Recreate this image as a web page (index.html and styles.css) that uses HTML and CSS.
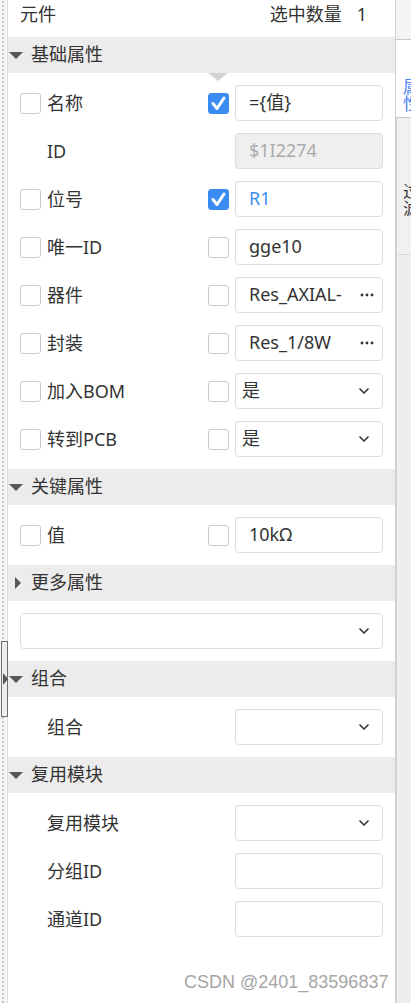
FILE: index.html
```html
<!DOCTYPE html>
<html lang="zh-CN">
<head>
<meta charset="utf-8">
<title>元件属性</title>
<link rel="stylesheet" href="styles.css">
</head>
<body>
<div class="app">
  <div class="grip">
    <div class="grip-handle"><span class="grip-arrow"></span></div>
  </div>

  <div class="panel">
    <div class="topbar">
      <span>元件</span>
      <span class="count">选中数量<span class="count-num">1</span></span>
    </div>

    <div class="sec-head"><span class="tri-box"><span class="tri-down"></span></span>基础属性</div>
    <div class="sec-body">
      <span class="caret"></span>
      <div class="row">
        <span class="cb"></span><span class="label">名称</span>
        <span class="cb checked"><svg viewBox="0 0 21 21" width="21" height="21"><polyline points="5,10.5 9,15.5 16,5" fill="none" stroke="#fff" stroke-width="3" stroke-linecap="round" stroke-linejoin="round"/></svg></span>
        <div class="field"><span class="field-text">={值}</span></div>
      </div>
      <div class="row">
        <span></span><span class="label">ID</span><span></span>
        <div class="field disabled"><span class="field-text">$1I2274</span></div>
      </div>
      <div class="row">
        <span class="cb"></span><span class="label">位号</span>
        <span class="cb checked"><svg viewBox="0 0 21 21" width="21" height="21"><polyline points="5,10.5 9,15.5 16,5" fill="none" stroke="#fff" stroke-width="3" stroke-linecap="round" stroke-linejoin="round"/></svg></span>
        <div class="field"><span class="field-text blue">R1</span></div>
      </div>
      <div class="row">
        <span class="cb"></span><span class="label">唯一ID</span><span class="cb"></span>
        <div class="field"><span class="field-text">gge10</span></div>
      </div>
      <div class="row">
        <span class="cb"></span><span class="label">器件</span><span class="cb"></span>
        <div class="field more"><span class="field-text clip">Res_AXIAL-0.3</span><svg class="dots" viewBox="0 0 14 4" width="14" height="4"><circle cx="2" cy="2" r="1.4"/><circle cx="7" cy="2" r="1.4"/><circle cx="12" cy="2" r="1.4"/></svg></div>
      </div>
      <div class="row">
        <span class="cb"></span><span class="label">封装</span><span class="cb"></span>
        <div class="field more"><span class="field-text clip">Res_1/8W</span><svg class="dots" viewBox="0 0 14 4" width="14" height="4"><circle cx="2" cy="2" r="1.4"/><circle cx="7" cy="2" r="1.4"/><circle cx="12" cy="2" r="1.4"/></svg></div>
      </div>
      <div class="row">
        <span class="cb"></span><span class="label">加入BOM</span><span class="cb"></span>
        <div class="field select"><span class="field-text">是</span><svg class="chev" viewBox="0 0 10 6" width="10" height="6"><polyline points="1,1 5,5 9,1"/></svg></div>
      </div>
      <div class="row">
        <span class="cb"></span><span class="label">转到PCB</span><span class="cb"></span>
        <div class="field select"><span class="field-text">是</span><svg class="chev" viewBox="0 0 10 6" width="10" height="6"><polyline points="1,1 5,5 9,1"/></svg></div>
      </div>
    </div>

    <div class="sec-head"><span class="tri-box"><span class="tri-down"></span></span>关键属性</div>
    <div class="sec-body">
      <div class="row">
        <span class="cb"></span><span class="label">值</span><span class="cb"></span>
        <div class="field"><span class="field-text">10kΩ</span></div>
      </div>
    </div>

    <div class="sec-head"><span class="tri-box"><span class="tri-right"></span></span>更多属性</div>
    <div class="sec-body">
      <div class="row">
        <div class="field select wide"><span class="field-text"></span><svg class="chev" viewBox="0 0 10 6" width="10" height="6"><polyline points="1,1 5,5 9,1"/></svg></div>
      </div>
    </div>

    <div class="sec-head"><span class="tri-box"><span class="tri-down"></span></span>组合</div>
    <div class="sec-body">
      <div class="row">
        <span></span><span class="label">组合</span><span></span>
        <div class="field select"><span class="field-text"></span><svg class="chev" viewBox="0 0 10 6" width="10" height="6"><polyline points="1,1 5,5 9,1"/></svg></div>
      </div>
    </div>

    <div class="sec-head"><span class="tri-box"><span class="tri-down"></span></span>复用模块</div>
    <div class="sec-body">
      <div class="row">
        <span></span><span class="label">复用模块</span><span></span>
        <div class="field select"><span class="field-text"></span><svg class="chev" viewBox="0 0 10 6" width="10" height="6"><polyline points="1,1 5,5 9,1"/></svg></div>
      </div>
      <div class="row">
        <span></span><span class="label">分组ID</span><span></span>
        <div class="field"><span class="field-text"></span></div>
      </div>
      <div class="row">
        <span></span><span class="label">通道ID</span><span></span>
        <div class="field"><span class="field-text"></span></div>
      </div>
    </div>
  </div>

  <div class="side">
    <div class="side-top"></div>
    <div class="side-tab active"><span class="side-text">属性</span></div>
    <div class="side-tab other"><span class="side-text">过滤</span></div>
    <div class="side-rest"></div>
  </div>

  <div class="watermark">CSDN @2401_83596837</div>
</div>
</body>
</html>
```

FILE: styles.css
```css
* { box-sizing: border-box; }

html, body {
  margin: 0;
  padding: 0;
  background: #fff;
}

body {
  font-family: "Noto Sans", "Noto Sans CJK SC", sans-serif;
  font-size: 18px;
  color: #333;
  line-height: 1.2;
}

.app {
  position: relative;
  display: flex;
  width: 411px;
  height: 1003px;
  overflow: hidden;
}

/* left drag strip */
.grip {
  position: relative;
  flex: 0 0 8px;
  background-color: #f6f6f6;
  background-image: linear-gradient(to bottom, #c6c6c6 50%, transparent 50%);
  background-size: 2px 4px;
  background-repeat: repeat-y;
  background-position: 2px 1px;
  border-right: 1px solid #dedede;
}

.grip-handle {
  position: absolute;
  left: 1px;
  top: 641px;
  width: 7px;
  height: 76px;
  border: 1px solid #6f6f6f;
  background: #eeeeee;
}

.grip-arrow {
  position: absolute;
  left: 1px;
  top: 31px;
  width: 0;
  height: 0;
  border-left: 5px solid #555;
  border-top: 6px solid transparent;
  border-bottom: 6px solid transparent;
}

/* main panel */
.panel {
  flex: 0 0 388px;
  border-right: 1px solid #cfcfcf;
  background: #fff;
}

.topbar {
  height: 37px;
  padding: 0 28px 7px 12px;
  display: flex;
  align-items: center;
  justify-content: space-between;
}

.count-num {
  margin-left: 15px;
}

.sec-head {
  height: 36px;
  background: #ececec;
  display: flex;
  align-items: center;
  padding-left: 1px;
}

.tri-box {
  width: 14px;
  margin-right: 8px;
  display: flex;
  align-items: center;
}

.tri-down {
  width: 0;
  height: 0;
  border-left: 7px solid transparent;
  border-right: 7px solid transparent;
  border-top: 7px solid #555;
}

.tri-right {
  margin-left: 6px;
  width: 0;
  height: 0;
  border-top: 6px solid transparent;
  border-bottom: 6px solid transparent;
  border-left: 6px solid #555;
}

.sec-body {
  position: relative;
  padding: 6px 12px;
}

.caret {
  position: absolute;
  left: 200px;
  top: 0;
  width: 0;
  height: 0;
  border-left: 10px solid transparent;
  border-right: 10px solid transparent;
  border-top: 8px solid #d4d4d4;
}

.row {
  height: 48px;
  display: grid;
  grid-template-columns: 21px 155px 21px 148px;
  column-gap: 6px;
  align-items: center;
}

.label {
  white-space: nowrap;
  padding-top: 1px;
}

.cb {
  display: block;
  width: 21px;
  height: 21px;
  border: 1px solid #c9c9c9;
  border-radius: 3px;
  background: #fff;
}

.cb.checked {
  border-color: #3a8cf2;
  background: #3a8cf2;
  position: relative;
}

.cb.checked svg {
  position: absolute;
  left: -1px;
  top: -1px;
}

.field {
  height: 36px;
  border: 1px solid #dcdcdc;
  border-radius: 4px;
  background: #fff;
  display: flex;
  align-items: center;
  padding: 0 13px;
  overflow: hidden;
}

.field-text {
  white-space: nowrap;
}

.field-text.blue {
  color: #3f8ef3;
}

.field.disabled {
  background: #efefef;
  color: #ababab;
}

.field.more {
  justify-content: space-between;
  padding-right: 8px;
}

.field-text.clip {
  width: 93px;
  overflow: hidden;
}

.dots circle {
  fill: #333;
}

.field.select {
  justify-content: space-between;
  padding: 0 13px 0 6px;
}

.field.wide {
  grid-column: 1 / -1;
}

.chev polyline {
  fill: none;
  stroke: #333;
  stroke-width: 1.6;
  stroke-linecap: round;
  stroke-linejoin: round;
}

/* right tab strip */
.side {
  width: 15px;
  flex: 0 0 15px;
  height: 1003px;
  overflow: hidden;
  background-color: #eeeeee;
}

.side-top {
  height: 40px;
  background: #f4f4f4;
  border-bottom: 1px solid #c8c8c8;
}

.side-tab {
  width: 30px;
  font-size: 17px;
  line-height: 17px;
}

.side-text {
  display: block;
  width: 18px;
}

.side-tab.active {
  height: 77px;
  background: #fff;
  color: #4b82f5;
  padding: 38px 0 0 7px;
}

.side-tab.other {
  height: 138px;
  background: #f1f1f1;
  border-top: 1px solid #c6c6c6;
  border-left: 1px solid #d2d2d2;
  border-bottom: 1px solid #d9d9d9;
  padding: 65px 0 0 6px;
  color: #333;
}

.side-rest {
  height: 748px;
  border-left: 1px solid #d2d2d2;
  background-color: #eeeeee;
}

.watermark {
  position: absolute;
  left: 184px;
  top: 972px;
  font-family: "Liberation Sans", Arial, sans-serif;
  font-size: 18px;
  color: #a6a6a6;
  white-space: nowrap;
  pointer-events: none;
}
```
